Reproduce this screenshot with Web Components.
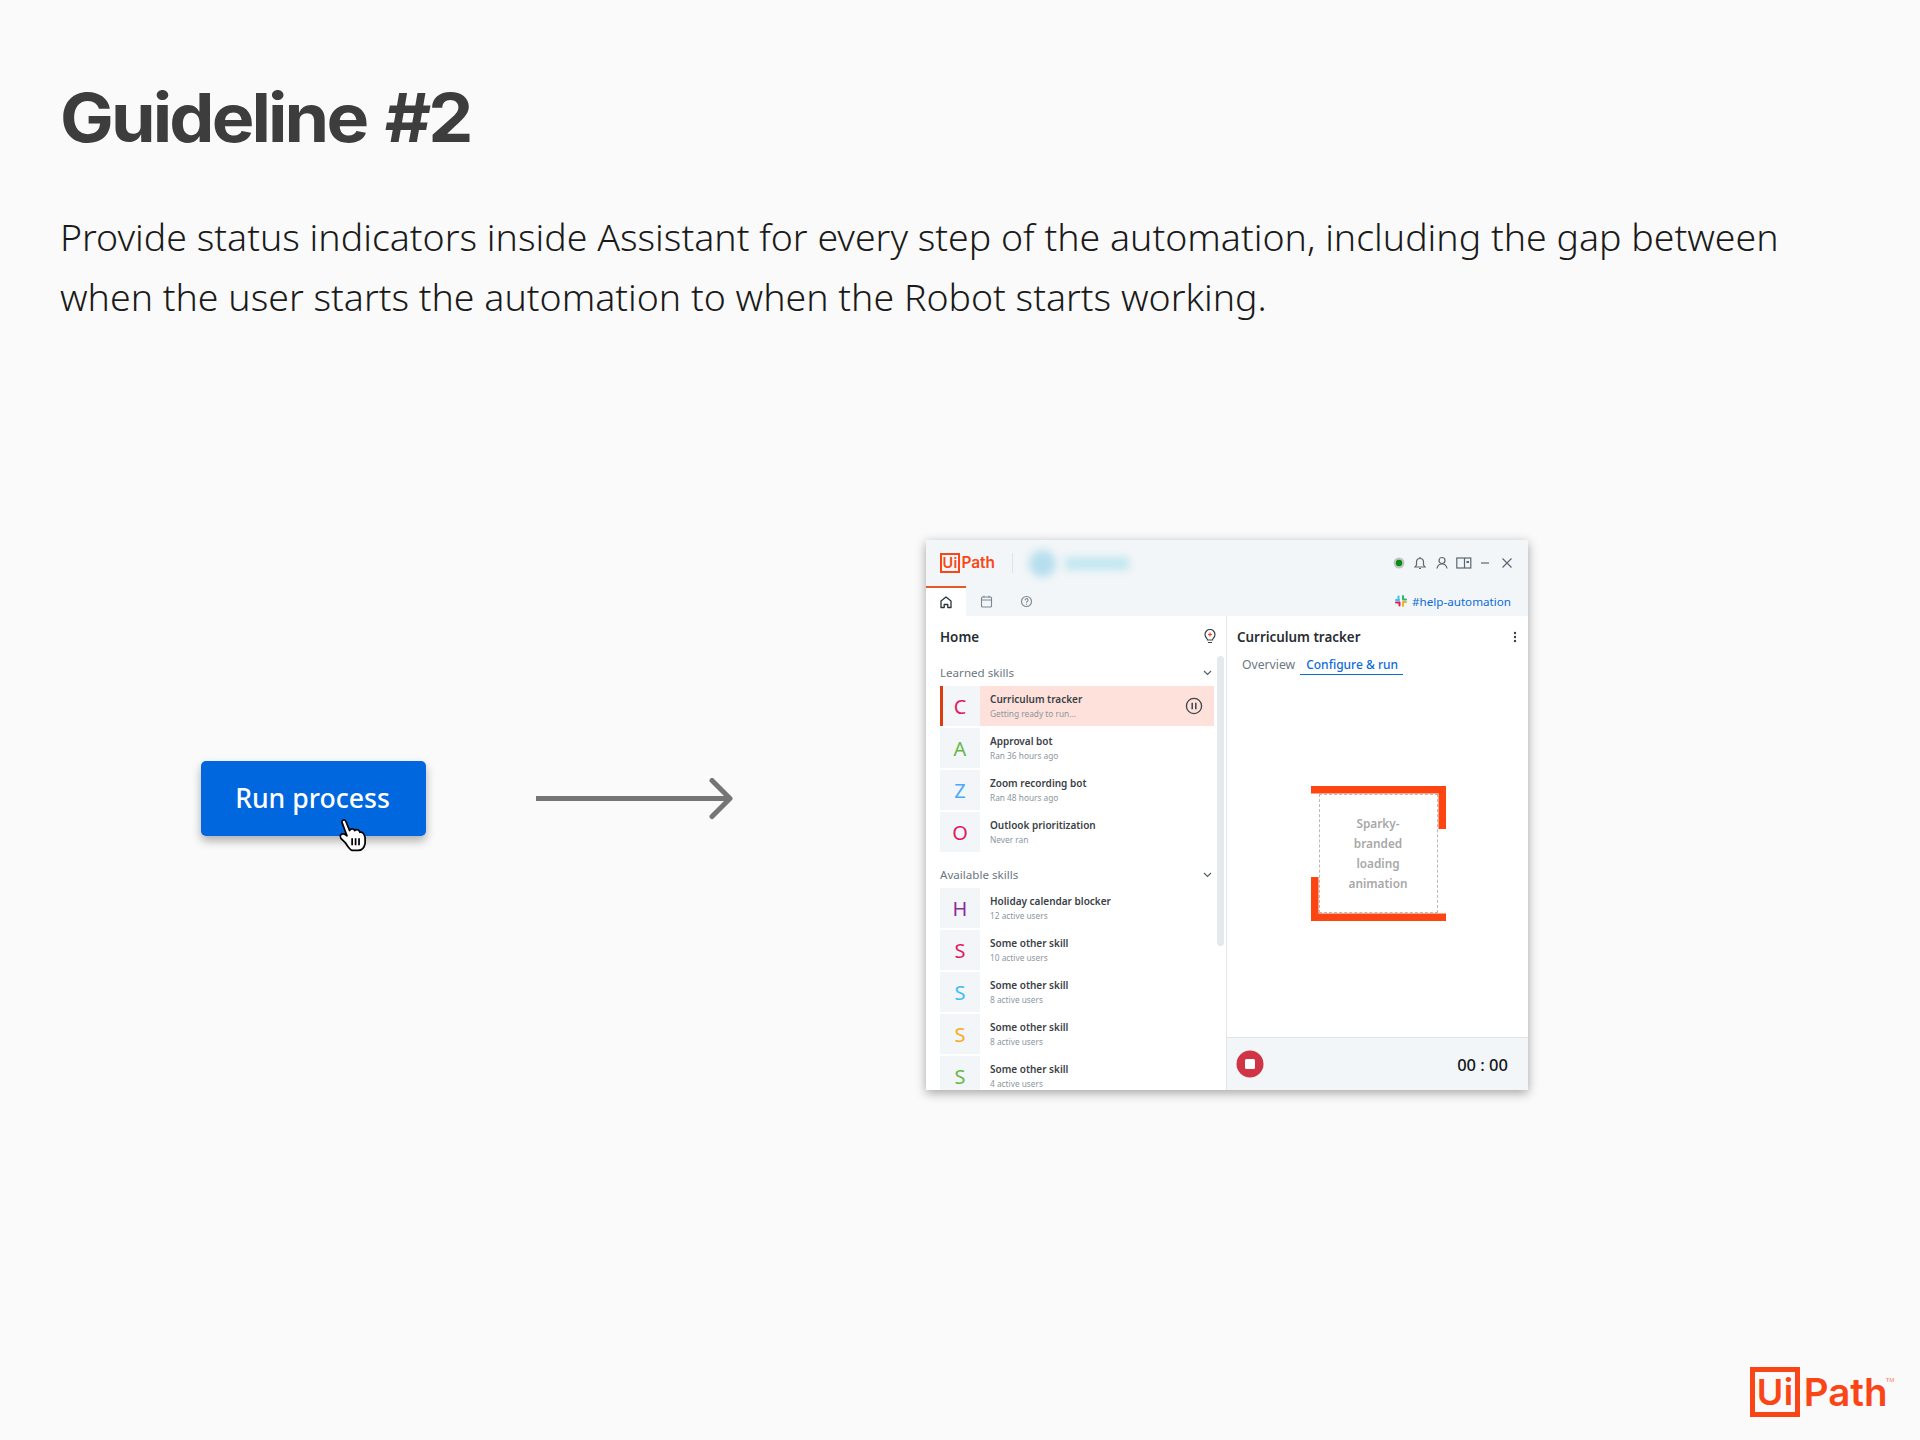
<!DOCTYPE html>
<html lang="en">
<head>
<meta charset="utf-8">
<title>Guideline #2</title>
<style>
  html, body { margin: 0; padding: 0; background: #fafafa; }
</style>
</head>
<body>
<guideline-slide>
  <span slot="title">Guideline #2</span>
  <span slot="text">Provide status indicators inside Assistant for every step of the automation, including the gap between when the user starts the automation to when the Robot starts working.</span>
  <run-button slot="trigger">Run process</run-button>
  <flow-arrow slot="arrow"></flow-arrow>
  <assistant-window slot="result">
    <skill-section slot="left" label="Learned skills">
      <skill-row letter="C" color="#e6175f" active><span slot="name">Curriculum tracker</span><span slot="sub">Getting ready to run...</span></skill-row>
      <skill-row letter="A" color="#66b944"><span slot="name">Approval bot</span><span slot="sub">Ran 36 hours ago</span></skill-row>
      <skill-row letter="Z" color="#4aa8ff"><span slot="name">Zoom recording bot</span><span slot="sub">Ran 48 hours ago</span></skill-row>
      <skill-row letter="O" color="#e6175f"><span slot="name">Outlook prioritization</span><span slot="sub">Never ran</span></skill-row>
    </skill-section>
    <skill-section slot="left" label="Available skills" spaced>
      <skill-row letter="H" color="#8e2a9e"><span slot="name">Holiday calendar blocker</span><span slot="sub">12 active users</span></skill-row>
      <skill-row letter="S" color="#e6175f"><span slot="name">Some other skill</span><span slot="sub">10 active users</span></skill-row>
      <skill-row letter="S" color="#3dbcf5"><span slot="name">Some other skill</span><span slot="sub">8 active users</span></skill-row>
      <skill-row letter="S" color="#fca91c"><span slot="name">Some other skill</span><span slot="sub">8 active users</span></skill-row>
      <skill-row letter="S" color="#66b944"><span slot="name">Some other skill</span><span slot="sub">4 active users</span></skill-row>
    </skill-section>
    <loading-placeholder slot="right">Sparky-branded loading animation</loading-placeholder>
  </assistant-window>
  <uipath-logo slot="logo" size="50"></uipath-logo>
</guideline-slide>

<script>
class GuidelineSlide extends HTMLElement {
  constructor() {
    super();
    this.attachShadow({ mode: "open" });
    this.shadowRoot.innerHTML = `
      <style>
        :host {
          display: flex;
          flex-direction: column;
          box-sizing: border-box;
          height: 1440px;
          padding: 76px 0 23px 60px;
          background: #fafafa;
          overflow: hidden;
        }
        h1 {
          margin: 0;
          height: 84px;
          font: 700 67px/84px Inter, sans-serif;
          letter-spacing: -2.67px;
          word-spacing: 4px;
          color: #3d3d3d;
          transform: scaleX(1.07);
          transform-origin: left center;
        }
        p {
          margin: 47px 0 0;
          width: 1790px;
          font: 300 37.5px/60px "Noto Sans", sans-serif;
          color: #1a1a1a;
        }
        .demo {
          display: flex;
          align-items: flex-start;
          margin-top: 213px;
          padding-left: 141px;
        }
        .trigger { margin-top: 221px; }
        .arrow { margin: 238px 0 0 110px; }
        .result { margin-left: 190px; }
        .logo { margin: auto 7.5px 0 0; align-self: flex-end; }
      </style>
      <h1><slot name="title"></slot></h1>
      <p><slot name="text"></slot></p>
      <div class="demo">
        <div class="trigger"><slot name="trigger"></slot></div>
        <div class="arrow"><slot name="arrow"></slot></div>
        <div class="result"><slot name="result"></slot></div>
      </div>
      <div class="logo"><slot name="logo"></slot></div>
    `;
  }
}

class RunButton extends HTMLElement {
  constructor() {
    super();
    this.attachShadow({ mode: "open" });
    this.shadowRoot.innerHTML = `
      <style>
        :host {
          display: flex;
          position: relative;
          align-items: center;
          justify-content: center;
          box-sizing: border-box;
          width: 225px;
          height: 75px;
          padding: 0 2px 0 0;
          border-radius: 5px;
          background: #0067df;
          color: #fff;
          font: 500 26.6px/1 "Noto Sans", sans-serif;
          box-shadow: 0 5px 10px rgba(0, 0, 0, .3);
        }
        svg { position: absolute; left: 133px; top: 54px; }
      </style>
      <slot></slot>
      <svg width="38" height="38" viewBox="0 0 44 44">
        <path d="M9 8 C10 5 13 5 14 8 L18 18 C20 15 23 16 24 18 C26 16 29 17 30 20 C33 19 35 22 36 26 L36 33 C35 38 32 41 28 41 L21 41 C18 40 16 36 13 32 L8 27 C6 24 8 21 12 22 L15 24 Z" fill="#fff" stroke="#000" stroke-width="2" stroke-linejoin="round"/>
        <path d="M21 27V35M25 27V35M29 27V35" stroke="#000" stroke-width="2" fill="none"/>
      </svg>
    `;
  }
}

class FlowArrow extends HTMLElement {
  constructor() {
    super();
    this.attachShadow({ mode: "open" });
    this.shadowRoot.innerHTML = `
      <style>:host { display: block; width: 200px; height: 44px; } svg { display: block; }</style>
      <svg width="200" height="44" viewBox="0 0 200 44" fill="none" stroke="#757575" stroke-width="5">
        <path d="M0 20.5H193"/>
        <path d="M176 2.5 L194 20.5 L176 38.5" stroke-linecap="round" stroke-linejoin="round"/>
      </svg>
    `;
  }
}

class UipathLogo extends HTMLElement {
  constructor() {
    super();
    this.attachShadow({ mode: "open" });
  }

  connectedCallback() {
    const size = Number(this.getAttribute("size")) || 20;
    const small = size < 30;
    this.shadowRoot.innerHTML = `
      <style>
        :host {
          display: flex;
          align-items: center;
          height: ${size}px;
          color: #fa4616;
          font-family: Inter, sans-serif;
          font-weight: 600;
        }
        .box {
          display: flex;
          align-items: center;
          justify-content: center;
          box-sizing: border-box;
          width: ${size}px;
          height: ${size}px;
          border: ${size * 0.1}px solid currentColor;
          font-size: ${size * 0.72}px;
          line-height: 1;
          letter-spacing: ${size * 0.01}px;
        }
        .path {
          margin-left: ${size * 0.07}px;
          font-size: ${size * 0.77}px;
          line-height: 1;
        }
        sup {
          align-self: flex-start;
          margin: 10px 0 0 -2px;
          font: 400 6px/1 "Liberation Sans", sans-serif;
          opacity: .7;
          display: ${small ? "none" : "block"};
        }
        .tm { width: ${small ? 0 : 27}px; }
      </style>
      <span class="box">Ui</span><span class="path">Path</span><sup class="tm">TM</sup>
    `;
  }
}

class SkillSection extends HTMLElement {
  constructor() {
    super();
    this.attachShadow({ mode: "open" });
  }

  connectedCallback() {
    const spaced = this.hasAttribute("spaced");
    this.shadowRoot.innerHTML = `
      <style>
        :host { display: block; }
        .head {
          display: flex;
          align-items: center;
          justify-content: space-between;
          box-sizing: border-box;
          height: ${spaced ? 36 : 30}px;
          padding: ${spaced ? 10 : 4}px 14px 0 0;
          font: 400 11.6px/1 "Noto Sans", sans-serif;
          color: #6b7882;
        }
        .rows { display: flex; flex-direction: column; gap: 2px; }
      </style>
      <div class="head">
        <span>${this.getAttribute("label")}</span>
        <svg width="9" height="6" viewBox="0 0 9 6" fill="none" stroke="#526069" stroke-width="1.2"><path d="M1 1l3.5 3.5L8 1"/></svg>
      </div>
      <div class="rows"><slot></slot></div>
    `;
  }
}

class SkillRow extends HTMLElement {
  constructor() {
    super();
    this.attachShadow({ mode: "open" });
  }

  connectedCallback() {
    const active = this.hasAttribute("active");
    this.shadowRoot.innerHTML = `
      <style>
        :host {
          display: flex;
          flex: none;
          height: 40px;
          width: 274px;
          background: ${active ? "#ffe1db" : "transparent"};
          font-family: "Noto Sans", sans-serif;
        }
        .tile {
          display: flex;
          flex: none;
          align-items: center;
          justify-content: center;
          width: 40px;
          background: #f3f6f8;
          box-shadow: ${active ? "inset 3px 0 0 #dc3c10" : "none"};
          color: ${this.getAttribute("color")};
          font-size: 20px;
          font-weight: 400;
        }
        .text { flex: 1; padding: 6px 0 0 10px; }
        .name { font-size: 10px; line-height: 14px; font-weight: 600; color: #3a4147; }
        .sub { font-size: 8.3px; line-height: 15px; color: #8c969e; }
        svg { align-self: center; margin-right: 11px; }
      </style>
      <div class="tile">${this.getAttribute("letter")}</div>
      <div class="text">
        <div class="name"><slot name="name"></slot></div>
        <div class="sub"><slot name="sub"></slot></div>
      </div>
      ${active ? `<svg width="18" height="18" viewBox="0 0 18 18" fill="none" stroke="#3c444a" stroke-width="1.3"><circle cx="9" cy="9" r="7.6"/><path d="M7.2 5.8v6.4M10.8 5.8v6.4" stroke-width="1.5"/></svg>` : ""}
    `;
  }
}

class LoadingPlaceholder extends HTMLElement {
  constructor() {
    super();
    this.attachShadow({ mode: "open" });
    this.shadowRoot.innerHTML = `
      <style>
        :host {
          display: block;
          position: relative;
          box-sizing: border-box;
          width: 135px;
          height: 135px;
          padding: 8px;
        }
        svg { position: absolute; left: 0; top: 0; }
        .inner {
          display: flex;
          align-items: center;
          justify-content: center;
          box-sizing: border-box;
          height: 119px;
          padding: 0 26px;
          border: 1px dashed #b9b9b9;
          text-align: center;
          font: 600 11.8px/20px "Noto Sans", sans-serif;
          color: #a8a8a8;
        }
      </style>
      <svg width="135" height="135" viewBox="0 0 135 135" fill="#fd4512">
        <path d="M0 0H135V43H127.5V7.5H0Z"/>
        <path d="M0 91H7.5V127.5H135V135H0Z"/>
      </svg>
      <div class="inner"><span><slot></slot></span></div>
    `;
  }
}

class AssistantWindow extends HTMLElement {
  constructor() {
    super();
    this.attachShadow({ mode: "open" });
    this.shadowRoot.innerHTML = `
      <style>
        :host {
          display: flex;
          flex-direction: column;
          width: 602px;
          height: 550px;
          background: #fff;
          font-family: "Noto Sans", sans-serif;
          box-shadow: 0 3px 10px rgba(0, 0, 0, .35);
          overflow: hidden;
        }
        header { flex: none; background: #f3f6f8; }
        .top {
          display: flex;
          align-items: center;
          height: 46px;
          padding: 0 13px 0 14px;
        }
        .sep { width: 1px; height: 20px; margin: 0 16px 0 17px; background: #dde3e7; }
        .blur { display: flex; align-items: center; filter: blur(4px); }
        .blur i { display: block; }
        .blur .dot { width: 27px; height: 27px; border-radius: 50%; background: #b6deee; }
        .blur .txt { width: 64px; height: 13px; margin-left: 9px; background: #bfe6ef; }
        .actions { display: flex; align-items: center; margin-left: auto; gap: 5.7px; }
        .tabs {
          display: flex;
          align-items: stretch;
          height: 30px;
          padding-right: 17px;
        }
        .tab { display: flex; align-items: center; justify-content: center; width: 40px; box-sizing: border-box; }
        .tab.on { background: #fff; border-top: 2px solid #e5572c; }
        .help {
          display: flex;
          align-items: center;
          gap: 5px;
          margin-left: auto;
          font-size: 11.65px;
          color: #0c6cdc;
        }
        .body { flex: 1; display: flex; min-height: 0; }
        .left {
          position: relative;
          flex: none;
          box-sizing: border-box;
          width: 301px;
          padding-left: 14px;
          border-right: 1.5px solid #e1e6e9;
          overflow: hidden;
        }
        .bar {
          position: absolute;
          left: 291px;
          top: 40px;
          width: 7px;
          height: 290px;
          border-radius: 4px;
          background: #e4e9ee;
        }
        .title {
          display: flex;
          align-items: center;
          justify-content: space-between;
          box-sizing: border-box;
          height: 40px;
          padding-top: 1px;
          font-size: 13.4px;
          font-weight: 600;
          color: #272d32;
        }
        .left .title { padding-right: 9px; }
        .right { flex: 1; display: flex; flex-direction: column; min-width: 0; }
        .right .title { padding-left: 10px; padding-right: 11px; }
        .pills {
          display: flex;
          height: 19px;
          padding-left: 15px;
          font-size: 12.2px;
          line-height: 17px;
        }
        .pills span { color: #6b7882; }
        .pills .on {
          margin-left: 5px;
          padding: 0 5px 0 6px;
          height: 18px;
          font-size: 12px;
          color: #0c6cdc;
          font-weight: 500;
          border-bottom: 1.5px solid #0c6cdc;
        }
        .stage { flex: 1; display: flex; align-items: center; justify-content: center; padding: 0 0 6px 1px; }
        footer {
          display: flex;
          flex: none;
          align-items: center;
          justify-content: space-between;
          box-sizing: border-box;
          height: 53px;
          padding: 0 20px 0 9px;
          background: #f3f6f8;
          border-top: 1px solid #e0e5e8;
          font-size: 16.5px;
          font-weight: 500;
          color: #14181b;
        }
      </style>
      <header>
        <div class="top">
          <uipath-logo size="20"></uipath-logo>
          <span class="sep"></span>
          <div class="blur"><i class="dot"></i><i class="txt"></i></div>
          <div class="actions">
            <svg width="16" height="16" viewBox="0 0 16 16"><circle cx="8" cy="8" r="5.5" fill="#bcc6c4"/><circle cx="8" cy="8" r="3.2" fill="#0b8a10"/></svg>
            <svg width="16" height="16" viewBox="0 0 16 16" fill="none" stroke="#5b6770" stroke-width="1.2"><path d="M3 12h10l-1.5-2V7a3.5 3.5 0 0 0-7 0v3ZM8 2v1.5M7 13.5h2"/></svg>
            <svg width="16" height="16" viewBox="0 0 16 16" fill="none" stroke="#5b6770" stroke-width="1.2"><circle cx="8" cy="5.5" r="3"/><path d="M3 13.5c.5-3 2.5-4.5 5-4.5s4.5 1.5 5 4.5"/></svg>
            <svg width="16" height="16" viewBox="0 0 16 16" fill="none" stroke="#5b6770" stroke-width="1.2"><rect x=".8" y="3" width="14" height="10"/><path d="M8.5 3v10"/><path d="M10.5 6h2.5v2h-2.5z" fill="#5b6770" stroke="none"/></svg>
            <svg width="16" height="16" viewBox="0 0 16 16" fill="none" stroke="#5b6770" stroke-width="1.2"><path d="M4 8h8"/></svg>
            <svg width="16" height="16" viewBox="0 0 16 16" fill="none" stroke="#5b6770" stroke-width="1.2"><path d="M3.5 3.5l9 9M12.5 3.5l-9 9"/></svg>
          </div>
        </div>
        <div class="tabs">
          <div class="tab on"><svg width="14" height="14" viewBox="0 0 14 14" fill="none" stroke="#2b3237" stroke-width="1.3"><path d="M2 12.5V6l5-4 5 4v6.5H8.8V9.5H5.200v3Z" stroke-linejoin="round"/></svg></div>
          <div class="tab"><svg width="13" height="13" viewBox="0 0 13 13" fill="none" stroke="#7b8790" stroke-width="1.1"><rect x="1.5" y="2" width="10" height="10" rx="1"/><path d="M1.5 5h10M4 .8v2M9 .8v2"/></svg></div>
          <div class="tab"><svg width="13" height="13" viewBox="0 0 13 13" fill="none" stroke="#7b8790" stroke-width="1.1"><circle cx="6.5" cy="6.5" r="5"/><path d="M5 5.2a1.5 1.5 0 1 1 2.2 1.300c-.5.3-.7.6-.7 1.200M6.500 8.800v.9"/></svg></div>
          <div class="help">
            <svg width="12" height="12" viewBox="0 0 12 12" fill="none" stroke-width="2" stroke-linecap="round">
              <path d="M3.5 1.5v3" stroke="#36c5f0"/><path d="M1 5h3" stroke="#36c5f0"/>
              <path d="M8 1v3" stroke="#2eb67d"/><path d="M8 4.5h3" stroke="#2eb67d"/>
              <path d="M8 7h3" stroke="#ecb22e"/><path d="M8 8v3" stroke="#ecb22e"/>
              <path d="M1 7.5h3" stroke="#e01e5a"/><path d="M4.5 7.5v3" stroke="#e01e5a"/>
            </svg>
            <span>#help-automation</span>
          </div>
        </div>
      </header>
      <div class="body">
        <section class="left">
          <div class="title"><span>Home</span>
            <svg width="14" height="16" viewBox="0 0 14 16" fill="none" stroke="#3a4147" stroke-width="1.2"><path d="M4.5 11c0-1.5-2.5-2.5-2.5-5.5a5 5 0 0 1 10 0c0 3-2.5 4-2.5 5.5ZM5 13.5h4"/><path d="M7 3.5v4M5 5.500h4" stroke="#fa4616"/></svg>
          </div>
          <slot name="left"></slot>
          <div class="bar"></div>
        </section>
        <section class="right">
          <div class="title"><span>Curriculum tracker</span>
            <svg width="4" height="12" viewBox="0 0 4 12" fill="#3a4147"><circle cx="2" cy="2" r="1.2"/><circle cx="2" cy="6" r="1.2"/><circle cx="2" cy="10" r="1.2"/></svg>
          </div>
          <div class="pills"><span>Overview</span><span class="on">Configure &amp; run</span></div>
          <div class="stage"><slot name="right"></slot></div>
          <footer>
            <svg width="28" height="28" viewBox="0 0 28 28"><circle cx="14" cy="14" r="13.5" fill="#cf3544"/><rect x="9" y="9" width="10" height="10" rx="1.5" fill="#fff"/></svg>
            <span>00 : 00</span>
          </footer>
        </section>
      </div>
    `;
  }
}

// children first, so the nested elements upgrade as soon as the parent renders
customElements.define("uipath-logo", UipathLogo);
customElements.define("skill-row", SkillRow);
customElements.define("skill-section", SkillSection);
customElements.define("loading-placeholder", LoadingPlaceholder);
customElements.define("run-button", RunButton);
customElements.define("flow-arrow", FlowArrow);
customElements.define("assistant-window", AssistantWindow);
customElements.define("guideline-slide", GuidelineSlide);
</script>
</body>
</html>
